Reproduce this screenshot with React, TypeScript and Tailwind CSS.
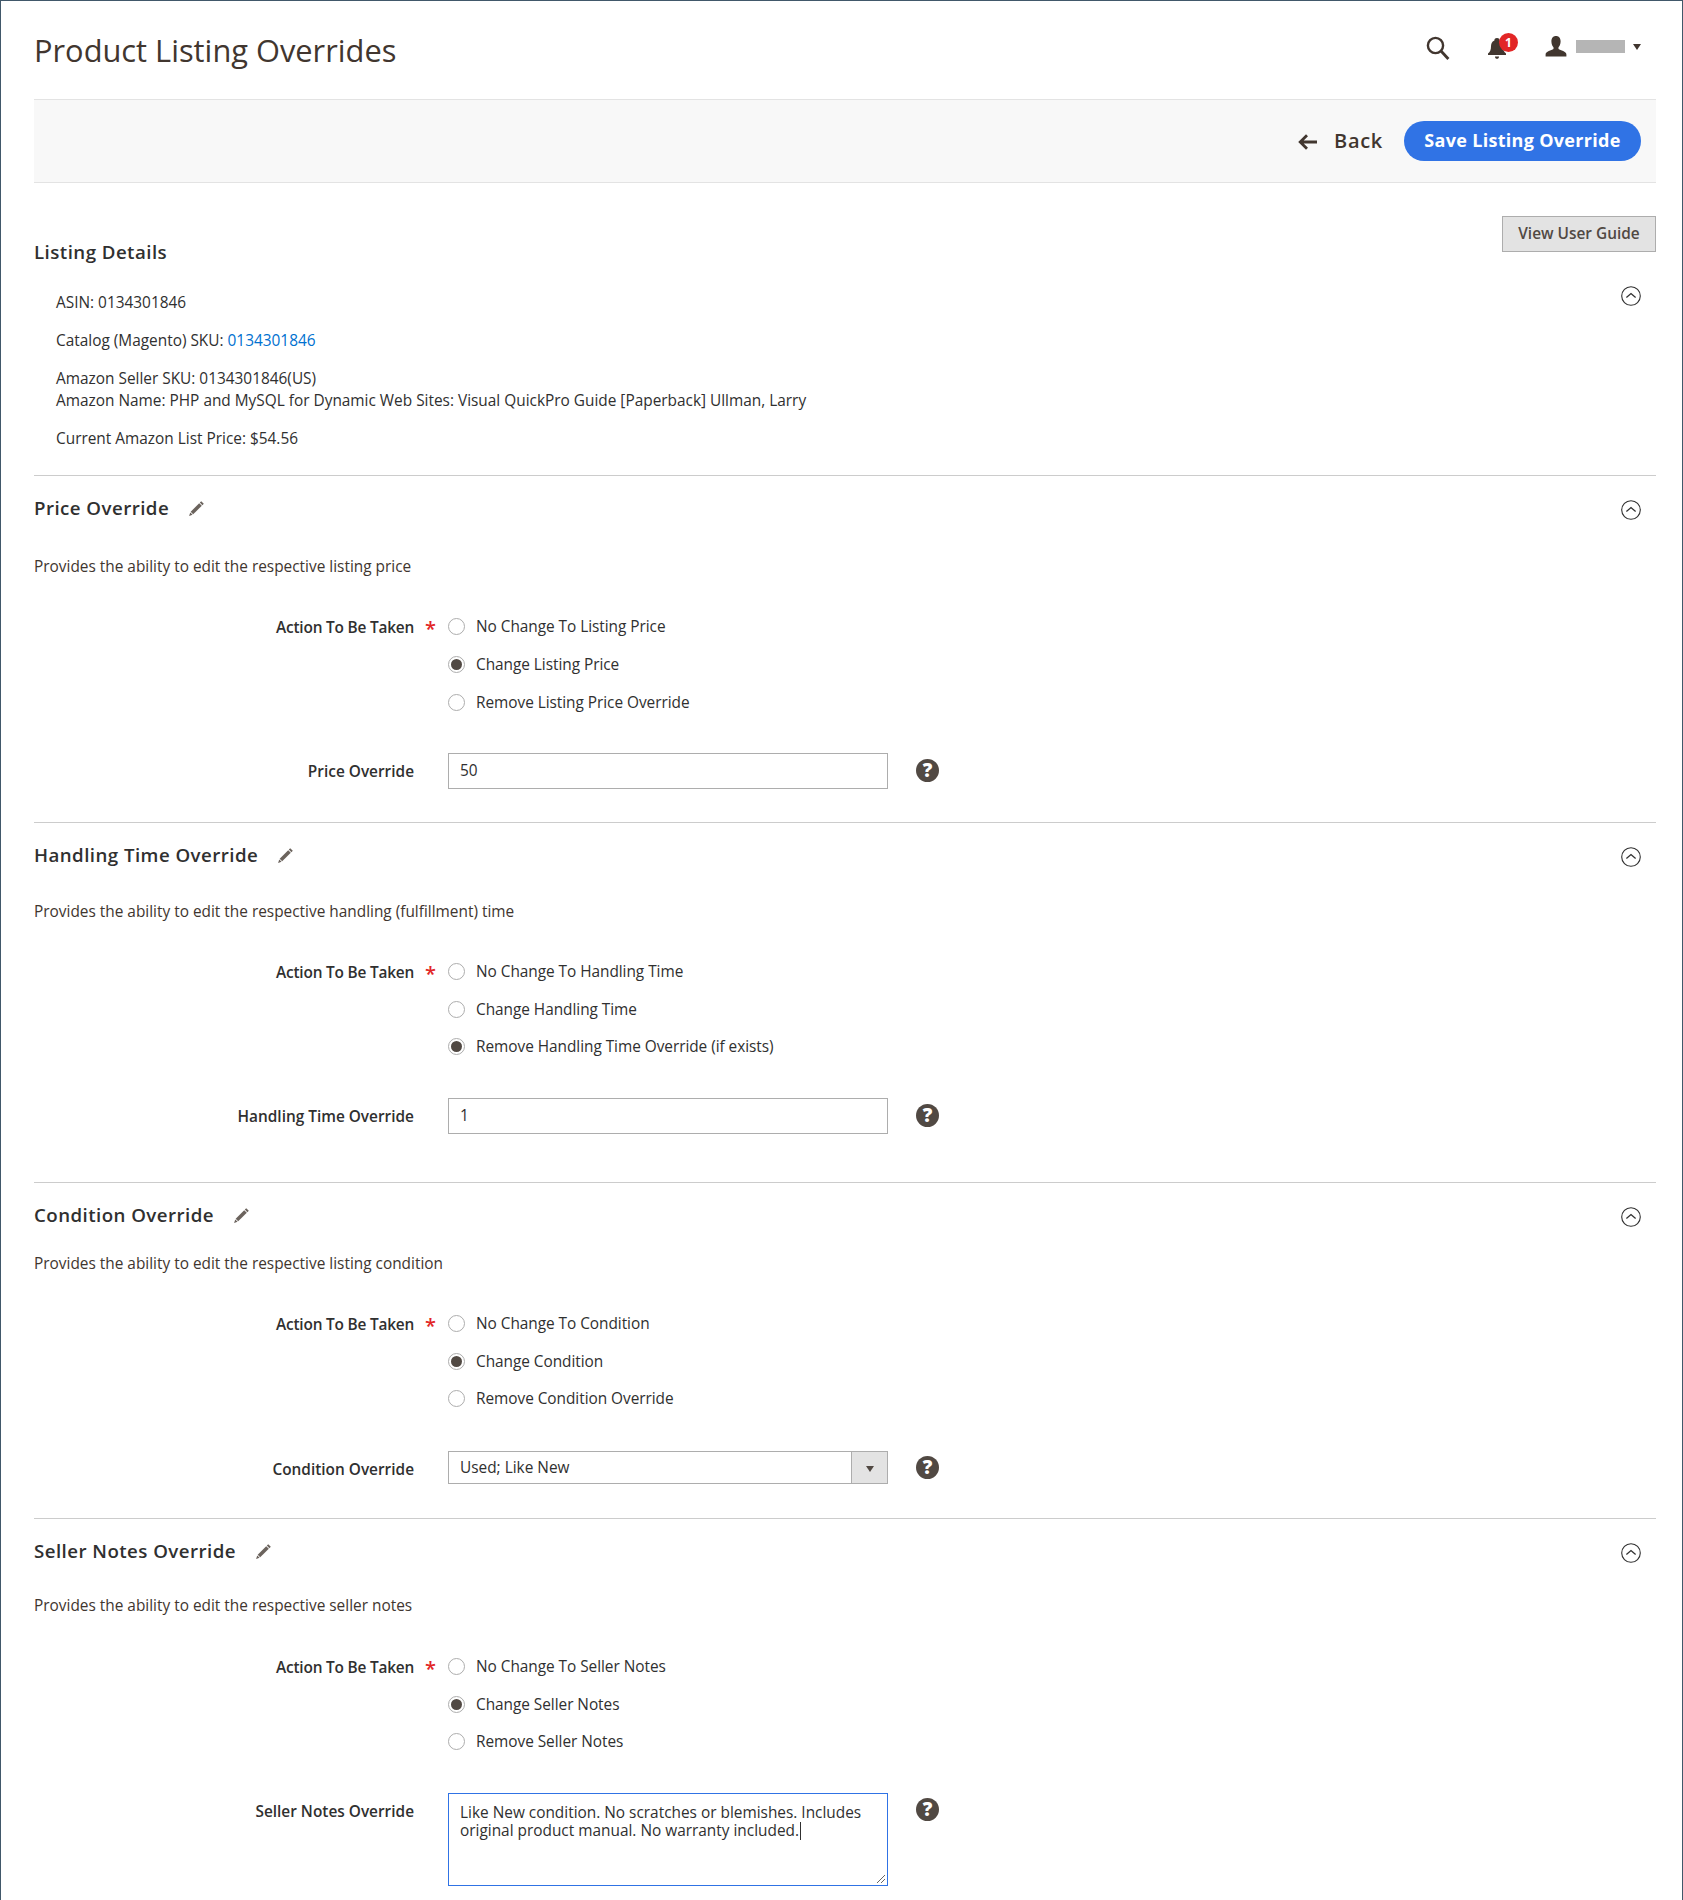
import React from 'react'

const font = 'font-["Open_Sans",sans-serif]'

const Pencil = () => (
    <svg width="15" height="15" viewBox="0 0 15 15" fill="#6b635d">
        <path d="M12.2 0.2 14.8 2.8 13.4 4.2 10.8 1.6Z" />
        <path d="M10.2 2.2 12.8 4.8 4.2 13.2 1.7 10.8Z" />
        <path d="M1.2 11.4 3.6 13.8 0.1 14.9Z" />
    </svg>
)

const Collapse = () => (
    <svg width="20" height="20" viewBox="0 0 20 20" fill="none" stroke="#303030" strokeWidth="1.1">
        <circle cx="10" cy="10" r="9.3" />
        <path d="M5.4 11.6 10 7.6 14.6 11.6" strokeWidth="1.3" />
    </svg>
)

const Help = () => (
    <div className="flex h-[23px] w-[23px] items-center justify-center rounded-full bg-[#514943] text-[19px] leading-none font-extrabold text-white">
        ?
    </div>
)

const Radio = ({ label, checked }: { label: string; checked?: boolean }) => (
    <div className="flex h-[20px] items-center gap-[11px]">
        <span className="mb-[1px] flex h-[17px] w-[17px] items-center justify-center rounded-full border border-[#adadad] bg-white">
            {checked && <span className="h-[11px] w-[11px] rounded-full bg-[#514943]" />}
        </span>
        <span className="text-[15.4px] leading-[20px] tracking-[-0.04px] text-[#303030]">{label}</span>
    </div>
)

const Row = ({ label, children, helpTop }: { label: string; children: React.ReactNode; helpTop: string }) => (
    <div className="flex items-start">
        <div className="w-[380px] pt-[9px] text-right text-[15.4px] leading-[20px] font-semibold text-[#303030]">{label}</div>
        <div className="w-[34px]" />
        {children}
        <div className={`ml-[28px] ${helpTop}`}>
            <Help />
        </div>
    </div>
)

const Actions = ({ options, selected, gap }: { options: string[]; selected: number; gap: string }) => (
    <div className="flex items-start">
        <div className="w-[380px] pt-[1px] text-right text-[15.4px] leading-[20px] font-semibold tracking-[-0.2px] text-[#303030]">Action To Be Taken</div>
        <div className="w-[34px] pt-[2px] pl-[11px] text-[20px] leading-[20px] font-semibold text-[#e22626]">*</div>
        <div className={`flex flex-col ${gap}`}>
            {options.map((o, i) => (
                <Radio key={o} label={o} checked={i === selected} />
            ))}
        </div>
    </div>
)

const Heading = ({ title }: { title: string }) => (
    <div className="flex items-center justify-between">
        <div className="flex items-center gap-[20px]">
            <h2 className="text-[18.7px] leading-[26px] font-semibold tracking-[0.45px] text-[#303030]">{title}</h2>
            <Pencil />
        </div>
        <div className="mt-[3px] mr-[15px]">
            <Collapse />
        </div>
    </div>
)

const Input = ({ value }: { value: string }) => (
    <div className="flex h-[36px] w-[440px] items-center border border-[#adadad] bg-white px-[11px] text-[15.4px] text-[#303030]">{value}</div>
)

const Desc = ({ children }: { children: React.ReactNode }) => (
    <p className="text-[15.4px] leading-[20px] text-[#41362f]">{children}</p>
)

export default function App() {
    return (
        <div className={`${font} h-[1900px] overflow-hidden border-x border-t border-[#41586a] bg-white pr-[26px] pl-[33px]`}>
            <header className="flex h-[98px] items-start justify-between">
                <h1 className="pt-[28px] text-[30.8px] leading-[42px] text-[#41362f]">Product Listing Overrides</h1>
                <div className="mt-[35px] mr-[15px] flex items-center">
                    <svg width="24" height="24" viewBox="0 0 24 24" fill="none" stroke="#41362f" strokeWidth="2.4">
                        <circle cx="9.5" cy="9.5" r="7.6" />
                        <path d="M15 15 22.4 23" strokeWidth="2.8" />
                    </svg>
                    <div className="relative ml-[37px] h-[24px] w-[32px]">
                        <svg width="20" height="22" viewBox="0 0 18 22" fill="#41362f" className="absolute top-[2px] left-0">
                            <path d="M9 0C11 0 11.6 1.4 11.6 2.4 14.3 3.4 15 5.8 15 8.5 15 12 16 14 18 15.6V17H0V15.6C2 14 3 12 3 8.5 3 5.8 3.7 3.4 6.4 2.4 6.4 1.4 7 0 9 0Z" />
                            <path d="M7 18.4H11C11 20 10.2 20.8 9 20.8S7 20 7 18.4Z" />
                        </svg>
                        <div className="absolute top-[-3px] left-[12px] flex h-[19px] w-[19px] items-center justify-center rounded-full bg-[#e22626] text-[12px] leading-none font-bold text-white">1</div>
                    </div>
                    <svg width="22" height="21" viewBox="0 0 22 21" fill="#41362f" className="mb-[3px] ml-[26px]">
                        <path d="M11 0C14 0 15.6 2.2 15.6 5.4 15.6 8 14.6 10 13.5 11.2V13C15.5 14.4 21.4 15.4 21.4 18.4V20.4H0.6V18.4C0.6 15.4 6.5 14.4 8.5 13V11.2C7.4 10 6.4 8 6.4 5.4 6.4 2.2 8 0 11 0Z" />
                    </svg>
                    <div className="mb-[3px] ml-[9px] h-[13px] w-[49px] bg-[#b5b5b5]" />
                    <div className="mb-[2px] ml-[8px] h-0 w-0 border-x-[4.5px] border-t-[6px] border-x-transparent border-t-[#41362f]" />
                </div>
            </header>

            <div className="flex h-[84px] items-center justify-end border-y border-[#e3e3e3] bg-[#f8f8f8] pr-[15px]">
                <svg width="20" height="16" viewBox="0 0 20 16" fill="none" stroke="#41362f" strokeWidth="2.8" className="mt-[1px]">
                    <path d="M19 8H2.5M9 1.2 2.2 8 9 14.8" />
                </svg>
                <span className="mr-[21px] ml-[16px] text-[20px] leading-none font-semibold tracking-[0.7px] text-[#41362f]">Back</span>
                <button className="h-[40px] w-[237px] rounded-full bg-[#3073e5] pb-[2px] text-[18px] font-bold tracking-[0.3px] text-white">Save Listing Override</button>
            </div>

            <section className="relative h-[293px] border-b border-[#cccccc]">
                <div className="flex justify-end pt-[33px]">
                    <div className="flex h-[36px] w-[154px] items-center justify-center border border-[#adadad] bg-[#e3e3e3] text-[15.4px] font-semibold text-[#514943]">View User Guide</div>
                </div>
                <h2 className="mt-[-12px] text-[18.7px] leading-[24px] font-semibold tracking-[0.45px] text-[#303030]">Listing Details</h2>
                <div className="absolute top-[103px] right-[15px]">
                    <Collapse />
                </div>
                <div className="mt-[28px] ml-[22px] flex flex-col gap-[16px] text-[15.4px] leading-[22px] text-[#303030]">
                    <p>ASIN: 0134301846</p>
                    <p>
                        Catalog (Magento) SKU: <a className="text-[#0071d0]">0134301846</a>
                    </p>
                    <p>
                        Amazon Seller SKU: 0134301846(US)
                        <br />
                        Amazon Name: PHP and MySQL for Dynamic Web Sites: Visual QuickPro Guide [Paperback] Ullman, Larry
                    </p>
                    <p>Current Amazon List Price: $54.56</p>
                </div>
            </section>

            <section className="h-[347px] border-b border-[#cccccc] pt-[19px]">
                <Heading title="Price Override" />
                <div className="mt-[36px]">
                    <Desc>Provides the ability to edit the respective listing price</Desc>
                </div>
                <div className="mt-[40px]">
                    <Actions gap="gap-[18px]" options={['No Change To Listing Price', 'Change Listing Price', 'Remove Listing Price Override']} selected={1} />
                </div>
                <div className="mt-[40px]">
                    <Row label="Price Override" helpTop="pt-[6px]">
                        <Input value="50" />
                    </Row>
                </div>
            </section>

            <section className="h-[360px] border-b border-[#cccccc] pt-[19px]">
                <Heading title="Handling Time Override" />
                <div className="mt-[34px]">
                    <Desc>Provides the ability to edit the respective handling (fulfillment) time</Desc>
                </div>
                <div className="mt-[40px]">
                    <Actions gap="gap-[17.5px]" options={['No Change To Handling Time', 'Change Handling Time', 'Remove Handling Time Override (if exists)']} selected={2} />
                </div>
                <div className="mt-[41px]">
                    <Row label="Handling Time Override" helpTop="pt-[6px]">
                        <Input value="1" />
                    </Row>
                </div>
            </section>

            <section className="h-[336px] border-b border-[#cccccc] pt-[19px]">
                <Heading title="Condition Override" />
                <div className="mt-[26px]">
                    <Desc>Provides the ability to edit the respective listing condition</Desc>
                </div>
                <div className="mt-[40px]">
                    <Actions gap="gap-[17.5px]" options={['No Change To Condition', 'Change Condition', 'Remove Condition Override']} selected={1} />
                </div>
                <div className="mt-[42px]">
                    <Row label="Condition Override" helpTop="pt-[5px]">
                        <div className="flex h-[33px] w-[440px] items-center border border-[#adadad] bg-white pl-[11px] text-[15.4px] text-[#303030]">
                            <span className="flex-1">Used; Like New</span>
                            <span className="flex h-full w-[36px] items-center justify-center border-l border-[#adadad] bg-[#e3e3e3]">
                                <span className="mt-[2px] h-0 w-0 border-x-[4px] border-t-[6px] border-x-transparent border-t-[#514943]" />
                            </span>
                        </div>
                    </Row>
                </div>
            </section>

            <section className="pt-[19px]">
                <Heading title="Seller Notes Override" />
                <div className="mt-[32px]">
                    <Desc>Provides the ability to edit the respective seller notes</Desc>
                </div>
                <div className="mt-[41px]">
                    <Actions gap="gap-[17.5px]" options={['No Change To Seller Notes', 'Change Seller Notes', 'Remove Seller Notes']} selected={1} />
                </div>
                <div className="mt-[41px]">
                    <Row label="Seller Notes Override" helpTop="pt-[5px]">
                        <div className="relative h-[93px] w-[440px] border border-[#3073e5] bg-white px-[11px] pt-[10px] text-[15.4px] leading-[18px] text-[#303030]">
                            Like New condition. No scratches or blemishes. Includes original product manual. No warranty included.
                            <span className="ml-[1px] inline-block h-[18px] w-px bg-[#303030] align-top" />
                            <svg width="10" height="10" viewBox="0 0 10 10" stroke="#666" className="absolute right-[1px] bottom-[1px]">
                                <path d="M1 9 9 1M5 9 9 5" />
                            </svg>
                        </div>
                    </Row>
                </div>
            </section>
        </div>
    )
}
